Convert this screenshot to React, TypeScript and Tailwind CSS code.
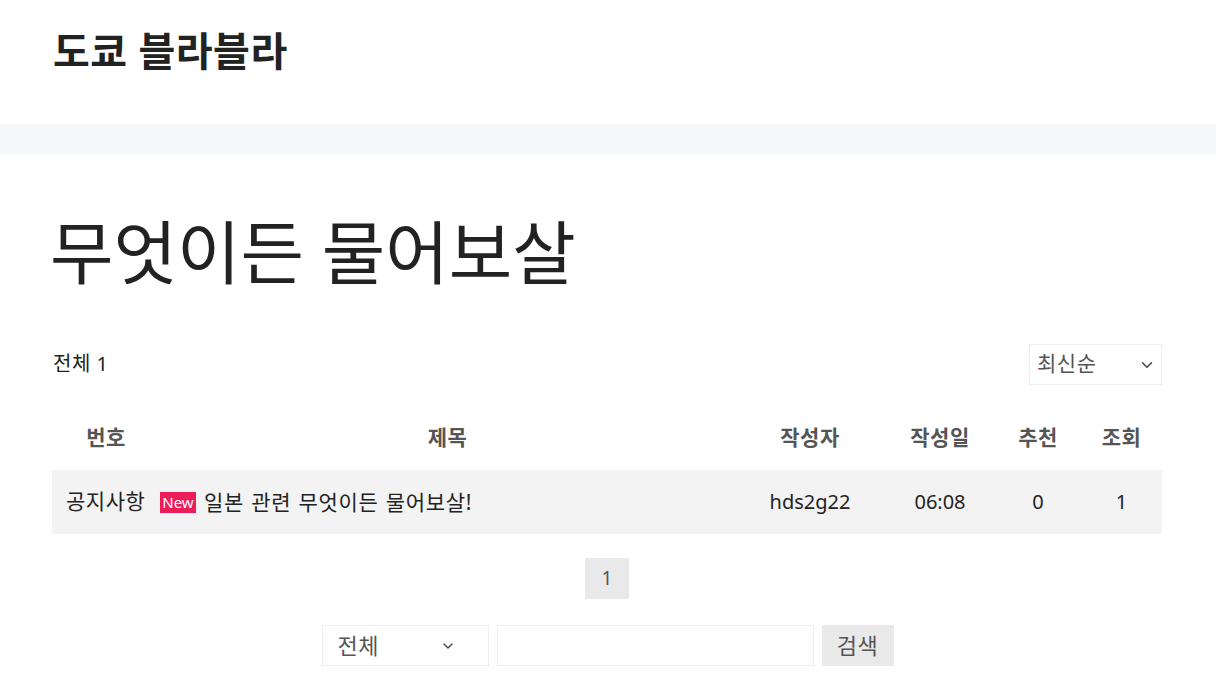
import { ChevronDown } from 'lucide-react';

const font = { fontFamily: '"Noto Sans", "Noto Sans CJK KR", sans-serif' };

type Post = {
  id: string;
  label: string;
  title: string;
  author: string;
  date: string;
  likes: number;
  views: number;
  isNew: boolean;
};

const posts: Post[] = [
  { id: '1', label: '공지사항', title: '일본 관련 무엇이든 물어보살!', author: 'hds2g22', date: '06:08', likes: 0, views: 1, isNew: true },
];

export default function App() {
  return (
    <div className="min-h-screen bg-white text-[#222]" style={font}>
      <header className="h-[124px] flex items-center">
        <div className="w-[1110px] ml-[52px]">
          <h1 className="text-[40px] font-bold leading-none tracking-[0.5px] text-[#222] -mt-[22px] ml-[1px]">도쿄 블라블라</h1>
        </div>
      </header>
      <div className="h-[30px] bg-[#f6f7f8]" />

      <main className="w-[1110px] ml-[52px]">
        <h2 className="mt-[61px] text-[69px] font-normal leading-[74px] text-[#222] -ml-[2px]">무엇이든 물어보살</h2>

        <div className="mt-[55px] flex items-center justify-between h-[40px]">
          <p className="text-[20px] leading-none tracking-[0.5px] ml-[1px]">전체 1</p>
          <div className="relative w-[133px] h-[41px] border border-[#eeeeee] bg-white flex items-center pl-[7px] text-[21px] tracking-[0.5px] text-[#555]">
            최신순
            <ChevronDown className="absolute right-[5px] top-[11px] w-[18px] h-[18px] text-[#444]" strokeWidth={2} />
          </div>
        </div>

        <table className="mt-[21px] w-full border-collapse table-fixed">
          <colgroup>
            <col className="w-[108px]" />
            <col className="w-[575px]" />
            <col className="w-[150px]" />
            <col className="w-[110px]" />
            <col className="w-[86px]" />
            <col className="w-[81px]" />
          </colgroup>
          <thead>
            <tr className="h-[65px] text-[21px] tracking-[0.5px] font-bold text-[#555]">
              <th className="text-center font-bold">번호</th>
              <th className="text-center font-bold">제목</th>
              <th className="text-center font-bold">작성자</th>
              <th className="text-center font-bold">작성일</th>
              <th className="text-center font-bold">추천</th>
              <th className="text-center font-bold">조회</th>
            </tr>
          </thead>
          <tbody>
            {posts.map(p => (
              <tr key={p.id} className="h-[64px] bg-[#f3f3f3] text-[20px] text-[#222]">
                <td className="pl-[14px] whitespace-nowrap text-[21px] tracking-[0.5px]">{p.label}</td>
                <td className="whitespace-nowrap">
                  <span className="inline-flex items-center gap-[8px]">
                    {p.isNew && (
                      <span className="inline-flex items-center justify-center w-[36px] h-[21px] bg-[#ed1c5b] text-white text-[15px] leading-none tracking-normal">New</span>
                    )}
                    <span className="text-[21px] tracking-[0.7px] [word-spacing:1px]">{p.title}</span>
                  </span>
                </td>
                <td className="text-center">{p.author}</td>
                <td className="text-center">{p.date}</td>
                <td className="text-center">{p.likes}</td>
                <td className="text-center">{p.views}</td>
              </tr>
            ))}
          </tbody>
        </table>

        <div className="mt-[24px] flex justify-center">
          <button className="w-[44px] h-[41px] bg-[#e9e9e9] text-[19px] text-[#555] flex items-center justify-center">1</button>
        </div>

        <div className="mt-[26px] flex justify-center items-center gap-[8px] pl-[1px]">
          <div className="relative w-[167px] h-[41px] border border-[#eeeeee] bg-white flex items-center pl-[15px] text-[22px] tracking-[0.5px] text-[#555]">
            전체
            <ChevronDown className="absolute right-[32px] top-[12px] w-[16px] h-[16px] text-[#444]" strokeWidth={2} />
          </div>
          <input className="w-[317px] h-[41px] border border-[#eeeeee] bg-white outline-none px-2" />
          <button className="w-[72px] h-[41px] bg-[#e9e9e9] text-[22px] tracking-[0.5px] text-[#555]">검색</button>
        </div>
      </main>
    </div>
  );
}
